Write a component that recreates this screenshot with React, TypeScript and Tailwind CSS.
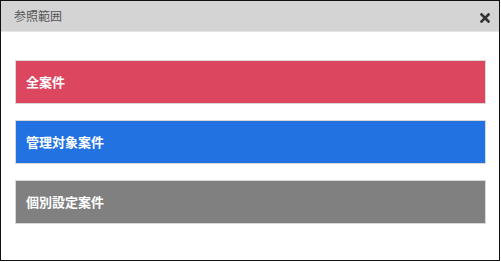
import React from 'react';

const items = [
    { label: '全案件', cls: 'bg-[#dc465f]' },
    { label: '管理対象案件', cls: 'bg-[#2273e1]' },
    { label: '個別設定案件', cls: 'bg-[#808080]' },
];

export default function App() {
    return (
        <div className="w-[501px] h-[262px] bg-white">
            <div className="w-[500px] h-[261px] border border-[#111] flex flex-col"
                style={{ fontFamily: '"Noto Sans CJK JP", "Noto Sans", sans-serif' }}>
                {/* Header */}
                <div className="h-[31px] bg-[#d4d4d4] border-b border-[#e6e6e6] flex items-center justify-between pl-[13px] pr-[9px] shrink-0">
                    <span className="text-[12px] text-[#555]">参照範囲</span>
                    <svg width="10" height="10" viewBox="0 0 10 10" className="mt-[3px]">
                        <path d="M1.5 1.5 L8.5 8.5 M8.5 1.5 L1.5 8.5" stroke="#333" strokeWidth="2.6" strokeLinecap="square" />
                    </svg>
                </div>

                {/* Options */}
                <div className="flex flex-col gap-[16px] px-[14px] pt-[28px]">
                    {items.map(it => (
                        <button key={it.label} type="button"
                            className={`${it.cls} h-[44px] w-[471px] border border-[#d8d8d8] text-left pl-[10px] text-white text-[13px] font-bold`}>
                            {it.label}
                        </button>
                    ))}
                </div>
            </div>
        </div>
    );
}
